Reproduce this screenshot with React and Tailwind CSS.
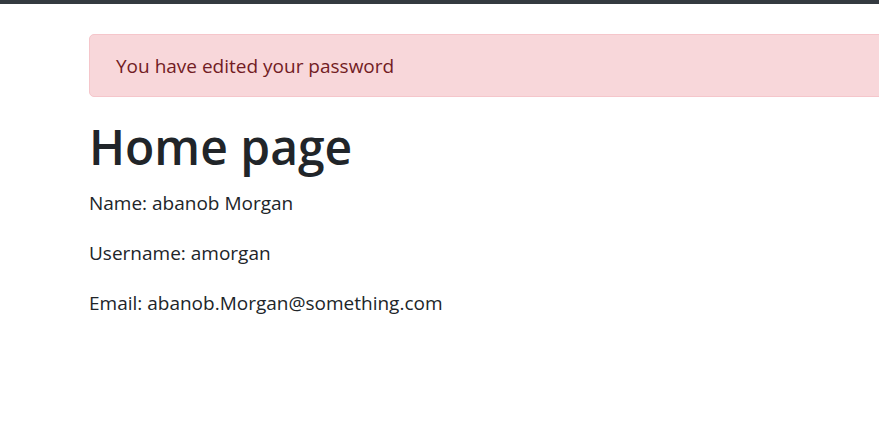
export default function App() {
  return (
    <div className="w-[879px] h-[437px] overflow-hidden bg-white" style={{ fontFamily: '"Open Sans", "Noto Sans", sans-serif' }}>
      <div className="h-[4px] bg-[#343a40]" />
      <div className="ml-[89px] mt-[30px] w-[1000px]">
        <div className="rounded-[5px] border border-[#f5c6cb] bg-[#f8d7da] pl-[26px] pr-[25px] pt-[16px] pb-[15px] text-[19px] leading-[30px] text-[#721c24] mb-[20px]">
          You have edited your password
        </div>
        <h1 className="text-[48px] leading-[60px] font-semibold text-[#212529] mb-[11px]">Home page</h1>
        <p className="text-[19px] leading-[30px] text-[#212529] mb-[20px]">Name: abanob Morgan</p>
        <p className="text-[19px] leading-[30px] text-[#212529] mb-[20px]">Username: amorgan</p>
        <p className="text-[19px] leading-[30px] text-[#212529] mb-[20px]">Email: abanob.Morgan@something.com</p>
      </div>
    </div>
  );
}
